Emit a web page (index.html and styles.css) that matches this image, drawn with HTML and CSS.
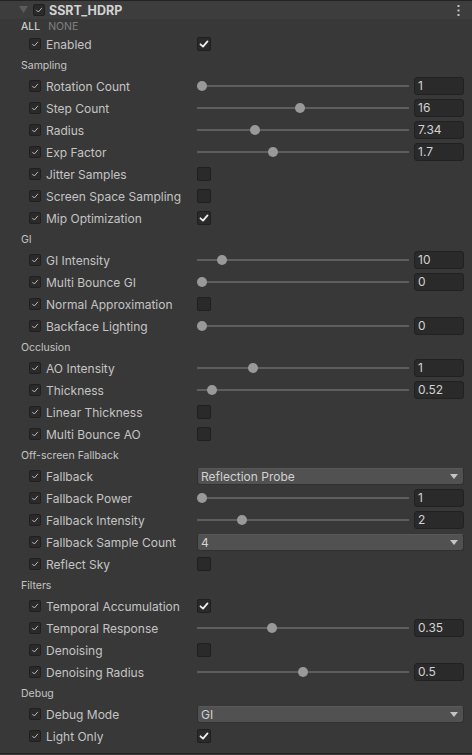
FILE: index.html
```html
<!DOCTYPE html>
<html>
<head>
<meta charset="utf-8">
<link rel="stylesheet" href="styles.css">
</head>
<body>
<div class="panel">
  <div class="header">
    <svg class="foldout" width="9" height="8" viewBox="0 0 9 8"><polygon points="0,0 9,0 4.5,7" fill="#5c5c5c"/></svg>
    <span class="cb small"><svg viewBox="0 0 12 12"><polyline points="3,6.2 5.2,8.4 9.2,3.8" /></svg></span>
    <span class="title">SSRT_HDRP</span>
    <svg class="kebab" width="3" height="11" viewBox="0 0 3 11"><rect x="0.5" y="0" width="2" height="2" fill="#c4c4c4"/><rect x="0.5" y="4.5" width="2" height="2" fill="#c4c4c4"/><rect x="0.5" y="9" width="2" height="2" fill="#c4c4c4"/></svg>
  </div>
  <div class="allnone"><span class="all">ALL</span><span class="none">NONE</span></div>

  <div class="row"><span class="cb small"><svg viewBox="0 0 12 12"><polyline points="3,6.2 5.2,8.4 9.2,3.8" /></svg></span><span class="label">Enabled</span><div class="value"><span class="cb big"><svg viewBox="0 0 14 14"><polyline points="3.5,7.3 6,9.6 10.5,4.4" /></svg></span></div></div>

  <div class="section">Sampling</div>
  <div class="row"><span class="cb small"><svg viewBox="0 0 12 12"><polyline points="3,6.2 5.2,8.4 9.2,3.8" /></svg></span><span class="label">Rotation Count</span><div class="value"><div class="slider"><div class="rail"><span class="thumb" style="left:0%"></span></div></div><div class="num">1</div></div></div>
  <div class="row"><span class="cb small"><svg viewBox="0 0 12 12"><polyline points="3,6.2 5.2,8.4 9.2,3.8" /></svg></span><span class="label">Step Count</span><div class="value"><div class="slider"><div class="rail"><span class="thumb" style="left:48.7%"></span></div></div><div class="num">16</div></div></div>
  <div class="row"><span class="cb small"><svg viewBox="0 0 12 12"><polyline points="3,6.2 5.2,8.4 9.2,3.8" /></svg></span><span class="label">Radius</span><div class="value"><div class="slider"><div class="rail"><span class="thumb" style="left:26.4%"></span></div></div><div class="num">7.34</div></div></div>
  <div class="row"><span class="cb small"><svg viewBox="0 0 12 12"><polyline points="3,6.2 5.2,8.4 9.2,3.8" /></svg></span><span class="label">Exp Factor</span><div class="value"><div class="slider"><div class="rail"><span class="thumb" style="left:35.3%"></span></div></div><div class="num">1.7</div></div></div>
  <div class="row"><span class="cb small"><svg viewBox="0 0 12 12"><polyline points="3,6.2 5.2,8.4 9.2,3.8" /></svg></span><span class="label">Jitter Samples</span><div class="value"><span class="cb big"></span></div></div>
  <div class="row"><span class="cb small"><svg viewBox="0 0 12 12"><polyline points="3,6.2 5.2,8.4 9.2,3.8" /></svg></span><span class="label">Screen Space Sampling</span><div class="value"><span class="cb big"></span></div></div>
  <div class="row"><span class="cb small"><svg viewBox="0 0 12 12"><polyline points="3,6.2 5.2,8.4 9.2,3.8" /></svg></span><span class="label">Mip Optimization</span><div class="value"><span class="cb big"><svg viewBox="0 0 14 14"><polyline points="3.5,7.3 6,9.6 10.5,4.4" /></svg></span></div></div>

  <div class="section">GI</div>
  <div class="row"><span class="cb small"><svg viewBox="0 0 12 12"><polyline points="3,6.2 5.2,8.4 9.2,3.8" /></svg></span><span class="label">GI Intensity</span><div class="value"><div class="slider"><div class="rail"><span class="thumb" style="left:10%"></span></div></div><div class="num">10</div></div></div>
  <div class="row"><span class="cb small"><svg viewBox="0 0 12 12"><polyline points="3,6.2 5.2,8.4 9.2,3.8" /></svg></span><span class="label">Multi Bounce GI</span><div class="value"><div class="slider"><div class="rail"><span class="thumb" style="left:0%"></span></div></div><div class="num">0</div></div></div>
  <div class="row"><span class="cb small"><svg viewBox="0 0 12 12"><polyline points="3,6.2 5.2,8.4 9.2,3.8" /></svg></span><span class="label">Normal Approximation</span><div class="value"><span class="cb big"></span></div></div>
  <div class="row"><span class="cb small"><svg viewBox="0 0 12 12"><polyline points="3,6.2 5.2,8.4 9.2,3.8" /></svg></span><span class="label">Backface Lighting</span><div class="value"><div class="slider"><div class="rail"><span class="thumb" style="left:0%"></span></div></div><div class="num">0</div></div></div>

  <div class="section">Occlusion</div>
  <div class="row"><span class="cb small"><svg viewBox="0 0 12 12"><polyline points="3,6.2 5.2,8.4 9.2,3.8" /></svg></span><span class="label">AO Intensity</span><div class="value"><div class="slider"><div class="rail"><span class="thumb" style="left:25.4%"></span></div></div><div class="num">1</div></div></div>
  <div class="row"><span class="cb small"><svg viewBox="0 0 12 12"><polyline points="3,6.2 5.2,8.4 9.2,3.8" /></svg></span><span class="label">Thickness</span><div class="value"><div class="slider"><div class="rail"><span class="thumb" style="left:5%"></span></div></div><div class="num">0.52</div></div></div>
  <div class="row"><span class="cb small"><svg viewBox="0 0 12 12"><polyline points="3,6.2 5.2,8.4 9.2,3.8" /></svg></span><span class="label">Linear Thickness</span><div class="value"><span class="cb big"></span></div></div>
  <div class="row"><span class="cb small"><svg viewBox="0 0 12 12"><polyline points="3,6.2 5.2,8.4 9.2,3.8" /></svg></span><span class="label">Multi Bounce AO</span><div class="value"><span class="cb big"></span></div></div>

  <div class="section">Off-screen Fallback</div>
  <div class="row"><span class="cb small"><svg viewBox="0 0 12 12"><polyline points="3,6.2 5.2,8.4 9.2,3.8" /></svg></span><span class="label">Fallback</span><div class="value"><div class="dropdown"><span>Reflection Probe</span><svg width="8" height="5" viewBox="0 0 8 5"><polygon points="0,0 8,0 4,5" fill="#c4c4c4"/></svg></div></div></div>
  <div class="row"><span class="cb small"><svg viewBox="0 0 12 12"><polyline points="3,6.2 5.2,8.4 9.2,3.8" /></svg></span><span class="label">Fallback Power</span><div class="value"><div class="slider"><div class="rail"><span class="thumb" style="left:0%"></span></div></div><div class="num">1</div></div></div>
  <div class="row"><span class="cb small"><svg viewBox="0 0 12 12"><polyline points="3,6.2 5.2,8.4 9.2,3.8" /></svg></span><span class="label">Fallback Intensity</span><div class="value"><div class="slider"><div class="rail"><span class="thumb" style="left:19.7%"></span></div></div><div class="num">2</div></div></div>
  <div class="row"><span class="cb small"><svg viewBox="0 0 12 12"><polyline points="3,6.2 5.2,8.4 9.2,3.8" /></svg></span><span class="label">Fallback Sample Count</span><div class="value"><div class="dropdown"><span>4</span><svg width="8" height="5" viewBox="0 0 8 5"><polygon points="0,0 8,0 4,5" fill="#c4c4c4"/></svg></div></div></div>
  <div class="row"><span class="cb small"><svg viewBox="0 0 12 12"><polyline points="3,6.2 5.2,8.4 9.2,3.8" /></svg></span><span class="label">Reflect Sky</span><div class="value"><span class="cb big"></span></div></div>

  <div class="section">Filters</div>
  <div class="row"><span class="cb small"><svg viewBox="0 0 12 12"><polyline points="3,6.2 5.2,8.4 9.2,3.8" /></svg></span><span class="label">Temporal Accumulation</span><div class="value"><span class="cb big"><svg viewBox="0 0 14 14"><polyline points="3.5,7.3 6,9.6 10.5,4.4" /></svg></span></div></div>
  <div class="row"><span class="cb small"><svg viewBox="0 0 12 12"><polyline points="3,6.2 5.2,8.4 9.2,3.8" /></svg></span><span class="label">Temporal Response</span><div class="value"><div class="slider"><div class="rail"><span class="thumb" style="left:34.8%"></span></div></div><div class="num">0.35</div></div></div>
  <div class="row"><span class="cb small"><svg viewBox="0 0 12 12"><polyline points="3,6.2 5.2,8.4 9.2,3.8" /></svg></span><span class="label">Denoising</span><div class="value"><span class="cb big"></span></div></div>
  <div class="row"><span class="cb small"><svg viewBox="0 0 12 12"><polyline points="3,6.2 5.2,8.4 9.2,3.8" /></svg></span><span class="label">Denoising Radius</span><div class="value"><div class="slider"><div class="rail"><span class="thumb" style="left:50%"></span></div></div><div class="num">0.5</div></div></div>

  <div class="section">Debug</div>
  <div class="row"><span class="cb small"><svg viewBox="0 0 12 12"><polyline points="3,6.2 5.2,8.4 9.2,3.8" /></svg></span><span class="label">Debug Mode</span><div class="value"><div class="dropdown"><span>GI</span><svg width="8" height="5" viewBox="0 0 8 5"><polygon points="0,0 8,0 4,5" fill="#c4c4c4"/></svg></div></div></div>
  <div class="row"><span class="cb small"><svg viewBox="0 0 12 12"><polyline points="3,6.2 5.2,8.4 9.2,3.8" /></svg></span><span class="label">Light Only</span><div class="value"><span class="cb big"><svg viewBox="0 0 14 14"><polyline points="3.5,7.3 6,9.6 10.5,4.4" /></svg></span></div></div>
</div>
</body>
</html>
```

FILE: styles.css
```css
html, body {
  margin: 0;
  padding: 0;
  background: #383838;
}
body {
  width: 472px;
  height: 755px;
  overflow: hidden;
  font-family: Inter, "Noto Sans", "Liberation Sans", sans-serif;
  color: #c4c4c4;
  font-size: 12px;
}
.panel {
  border-top: 1px solid #232323;
  border-bottom: 1px solid #232323;
  padding-bottom: 6px;
}
.header {
  height: 18px;
  background: #3d3d3d;
  display: flex;
  align-items: center;
  padding-left: 19px;
  padding-right: 12px;
}
.foldout {
  margin-right: 5px;
  flex: none;
}
.header .cb {
  margin-right: 4px;
}
.title {
  font-weight: 700;
  font-size: 12.5px;
  color: #d2d2d2;
  flex: 1;
}
.kebab { flex: none; }
.allnone {
  height: 14px;
  display: flex;
  align-items: center;
  padding-left: 21px;
  font-size: 10.5px;
  gap: 8px;
}
.all { color: #e0e0e0; }
.none { color: #808080; }

.cb {
  box-sizing: border-box;
  display: inline-flex;
  flex: none;
  background: #2a2a2a;
  border: 1px solid #1f1f1f;
  border-radius: 2px;
}
.cb svg { width: 100%; height: 100%; }
.cb polyline { fill: none; stroke-linecap: round; stroke-linejoin: round; }
.cb.small { width: 12px; height: 12px; }
.cb.small polyline { stroke: #c4c4c4; stroke-width: 1.1; }
.cb.big { width: 14px; height: 14px; }
.cb.big svg { margin: -1px; width: 14px; height: 14px; }
.cb.big polyline { stroke: #eeeeee; stroke-width: 1.8; }

.row {
  height: 22px;
  display: flex;
  align-items: center;
  padding-left: 29px;
  padding-right: 8px;
}
.label {
  width: 151px;
  margin-left: 5px;
  font-size: 12px;
  white-space: nowrap;
}
.value {
  flex: 1;
  display: flex;
  align-items: center;
  gap: 5px;
}
.section {
  height: 20px;
  display: flex;
  align-items: center;
  padding-left: 21px;
  padding-top: 1px;
  box-sizing: border-box;
  font-size: 10.5px;
  color: #c4c4c4;
}
.slider {
  flex: 1;
  height: 14px;
  position: relative;
  display: flex;
  align-items: center;
}
.slider::before {
  content: "";
  position: absolute;
  left: 0;
  right: 0;
  top: 6px;
  height: 2px;
  background: #5e5e5e;
}
.rail {
  position: relative;
  flex: 1;
  margin: 0 5px;
  height: 14px;
}
.thumb {
  position: absolute;
  top: 2px;
  width: 10px;
  height: 10px;
  margin-left: -5px;
  border-radius: 50%;
  background: #999999;
}
.num {
  box-sizing: border-box;
  width: 50px;
  height: 18px;
  background: #2a2a2a;
  border: 1px solid #212121;
  border-radius: 3px;
  padding-left: 3px;
  line-height: 16px;
  font-size: 12px;
  color: #d2d2d2;
}
.dropdown {
  box-sizing: border-box;
  flex: 1;
  height: 17px;
  background: #515151;
  border: 1px solid #303030;
  border-top-color: #585858;
  border-radius: 3px;
  display: flex;
  align-items: center;
  justify-content: space-between;
  padding: 0 5px 0 3px;
  font-size: 12px;
  color: #d2d2d2;
}
.dropdown svg { flex: none; }
```
